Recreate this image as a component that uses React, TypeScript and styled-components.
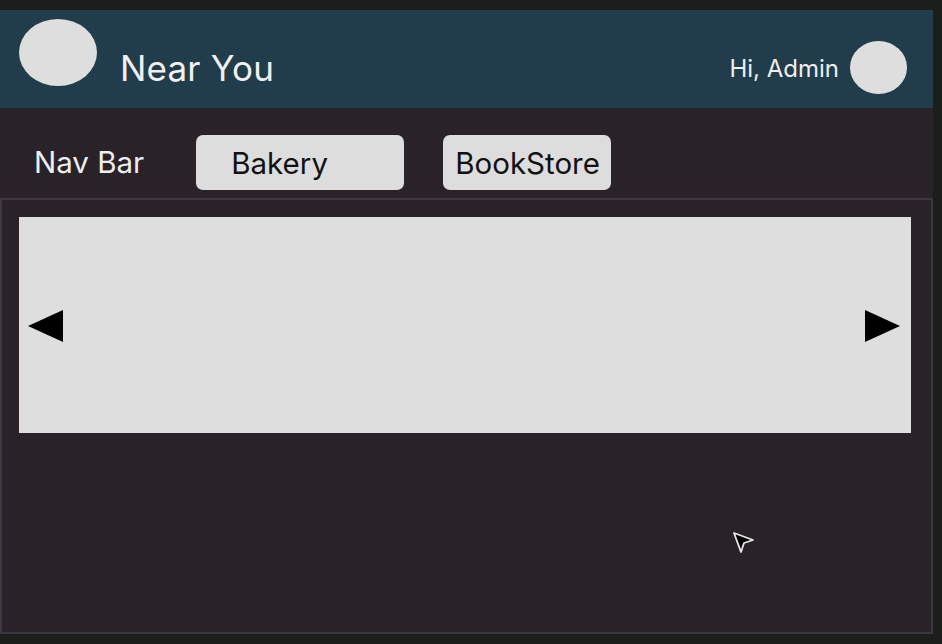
import styled, { createGlobalStyle } from "styled-components";

const GlobalStyle = createGlobalStyle`
  html, body {
    margin: 0;
    padding: 0;
    background: #1a1f1c;
    font-family: Inter, "Noto Sans", sans-serif;
  }
`;

const Screen = styled.div`
  width: 942px;
  height: 644px;
  padding-top: 10px;
  box-sizing: border-box;
  position: relative;
  overflow: hidden;
`;

const Frame = styled.div`
  width: 933px;
  height: 624px;
  display: flex;
  flex-direction: column;
  background: #292229;
`;

const Header = styled.header`
  height: 98px;
  background: #213c4a;
  display: flex;
  align-items: center;
  padding: 0 26px 0 19px;
  box-sizing: border-box;
`;

const Logo = styled.div`
  width: 78px;
  height: 67px;
  border-radius: 50%;
  background: #dedede;
  margin-top: -14px;
`;

const Title = styled.h1`
  margin: 18px 0 0 23px;
  font-size: 35px;
  font-weight: 400;
  color: #f0f0f0;
  flex: 1;
  letter-spacing: 0.2px;
`;

const Greeting = styled.span`
  font-size: 24px;
  color: #eeeeee;
  margin-right: 11px;
  margin-top: 19px;
`;

const Avatar = styled.div`
  width: 57px;
  height: 53px;
  border-radius: 50%;
  background: #dedede;
  margin-top: 16px;
`;

const NavRow = styled.nav`
  height: 90px;
  display: flex;
  align-items: flex-start;
  padding: 27px 0 0 34px;
  box-sizing: border-box;
`;

const NavLabel = styled.span`
  font-size: 29.5px;
  line-height: 55px;
  color: #eeeeee;
  margin-right: 52px;
`;

const NavButton = styled.button<{ $w: number; $pl: number }>`
  width: ${(p) => p.$w}px;
  height: 55px;
  border: none;
  border-radius: 7px;
  background: #dddddd;
  color: #111;
  font-family: inherit;
  font-size: 29.5px;
  text-align: left;
  white-space: nowrap;
  padding: 0 0 0 ${(p) => p.$pl}px;
  margin-right: 39px;
`;

const Content = styled.main`
  flex: 1;
  border: 2px solid #3a3942;
  padding: 17px 20px 0 17px;
`;

const Carousel = styled.div`
  height: 216px;
  background: #dedede;
  display: flex;
  align-items: center;
  justify-content: space-between;
  padding: 0 11px 0 9px;
`;

const Arrow = styled.svg`
  width: 35px;
  height: 32px;
  margin-top: 1px;
`;

const Cursor = styled.svg`
  position: absolute;
  left: 732px;
  top: 531px;
  width: 24px;
  height: 26px;
`;

export default function App() {
  return (
    <>
      <GlobalStyle />
      <Screen>
        <Frame>
          <Header>
            <Logo />
            <Title>Near You</Title>
            <Greeting>Hi, Admin</Greeting>
            <Avatar />
          </Header>
          <NavRow>
            <NavLabel>Nav Bar</NavLabel>
            <NavButton $w={208} $pl={35}>Bakery</NavButton>
            <NavButton $w={168} $pl={12}>BookStore</NavButton>
          </NavRow>
          <Content>
            <Carousel>
              <Arrow viewBox="0 0 35 32">
                <polygon points="0,16 35,0 35,32" fill="#000" />
              </Arrow>
              <Arrow viewBox="0 0 35 32">
                <polygon points="0,0 35,16 0,32" fill="#000" />
              </Arrow>
            </Carousel>
          </Content>
        </Frame>
        <Cursor viewBox="0 0 24 26">
          <polygon
            points="2,2 21,9 12,12 9,21"
            fill="#000"
            stroke="#e8e8e8"
            strokeWidth="1.8"
            strokeLinejoin="round"
          />
        </Cursor>
      </Screen>
    </>
  );
}
